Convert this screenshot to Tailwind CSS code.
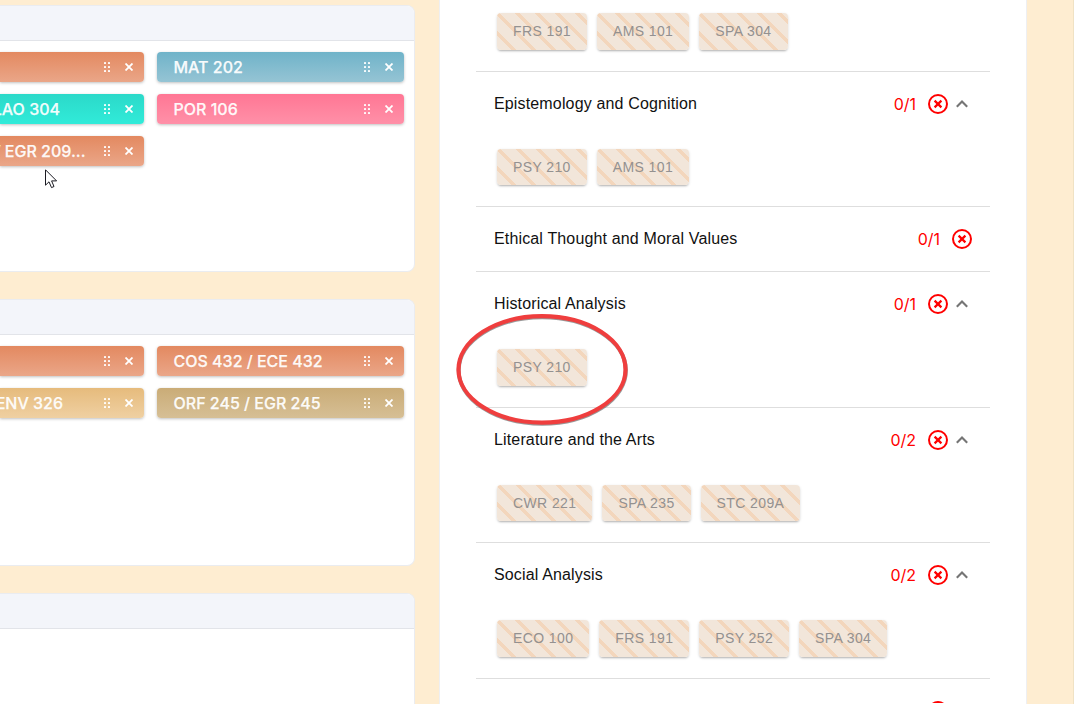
<!DOCTYPE html>
<html lang="en">
<head>
<meta charset="utf-8">
<title>Course planner</title>
<script src="https://cdn.jsdelivr.net/npm/@tailwindcss/browser@4"></script>
</head>
<body class="w-[1074px] h-[704px] overflow-hidden bg-[#feedd1] relative">
<svg class="hidden">
  <symbol id="grip" viewBox="0 0 6 10"><g fill="#fff" fill-opacity=".92"><rect x="0" y="0" width="2" height="2" rx=".5"/><rect x="4" y="0" width="2" height="2" rx=".5"/><rect x="0" y="4" width="2" height="2" rx=".5"/><rect x="4" y="4" width="2" height="2" rx=".5"/><rect x="0" y="8" width="2" height="2" rx=".5"/><rect x="4" y="8" width="2" height="2" rx=".5"/></g></symbol>
  <symbol id="close" viewBox="0 0 8 8"><path d="M0.5 0.5L7.5 7.5M7.5 0.5L0.5 7.5" stroke="#fff" stroke-width="1.8" fill="none"/></symbol>
  <symbol id="bad" viewBox="0 0 20 20"><circle cx="10" cy="10" r="9" fill="none" stroke="#f00" stroke-width="2"/><path d="M6.6 6.6L13.4 13.4M13.4 6.6L6.6 13.4" stroke="#f00" stroke-width="2.2"/></symbol>
  <symbol id="up" viewBox="0 0 12 8"><path d="M0.8 6.7L6 1.5L11.2 6.7" fill="none" stroke="#757575" stroke-width="2.1"/></symbol>
</svg>
<div class="flex h-full overflow-hidden">
  <main id="left" class="w-[415px] h-full overflow-hidden shrink-0 pt-[5px] flex flex-col gap-[27.5px]"></main>
  <aside class="ml-[24px] w-[588px] shrink-0 h-full bg-white border-x border-[#eeeff2] overflow-hidden">
    <div id="right" class="ml-[36px] w-[514px] pt-[13.4px] font-['Liberation_Sans',Arial,sans-serif]"></div>
  </aside>
  <div class="ml-auto w-px h-full bg-[#f0e2c4]"></div>
</div>
<svg class="absolute left-[450px] top-[308px]" width="184" height="124" viewBox="0 0 184 124" fill="none">
  <ellipse cx="92.3" cy="62.5" rx="83.6" ry="53.2" stroke="#555" stroke-opacity=".6" stroke-width="4"/>
  <ellipse cx="92" cy="61.4" rx="83.5" ry="53.2" stroke="#ef3e3e" stroke-width="4.2"/>
</svg>
<svg class="absolute left-[45px] top-[169px]" width="13" height="20" viewBox="0 0 13 20"><path d="M.5 .8V16.2L4 12.8L6.5 18.6L9 17.5L6.6 11.9H11.6Z" fill="#fff" stroke="#1a1a22" stroke-width="1"/></svg>
<script>
const O='from-[#e38960] to-[#eaa688]';
const sems=[
 [[O,'',60],['from-[#6fb3c9] to-[#95c4d4]','MAT 202'],['from-[#2bd9c9] to-[#31ebd9]','LAO 304',60],['from-[#ff7694] to-[#ff90a8]','POR 106'],[O,'/ EGR 209...',85.5]],
 [[O,'',60],[O,'COS 432 / ECE 432'],['from-[#e6bb7c] to-[#efd0a2]','ENV 326',63],['from-[#caac77] to-[#d6bf95]','ORF 245 / EGR 245']],
 []];
const chip=([c,t,end])=>`<div class="h-[30px] ${end?'rounded-r-[4px]':'rounded-[4px]'} bg-linear-to-b ${c} shadow-[0_1px_3px_rgba(0,0,0,0.25)] flex items-center text-white/95 text-[16px] leading-[30px] font-medium [-webkit-text-stroke:0.25px_rgba(255,255,255,0.9)] whitespace-nowrap overflow-hidden">
 ${end?`<div class="flex justify-end overflow-hidden" style="width:${end}px">${t}</div>`:`<div class="pl-[16.5px]">${t}</div>`}
 <svg class="ml-auto mr-[15px] w-[6px] h-[10px] shrink-0"><use href="#grip"/></svg><svg class="mr-[11px] w-2 h-2 shrink-0"><use href="#close"/></svg></div>`;
document.getElementById('left').innerHTML=sems.map(s=>`<section class="h-[266.5px] shrink-0 bg-white border border-l-0 border-[#eaecf0] rounded-r-[8px] overflow-hidden font-[Inter,sans-serif]">
 <div class="h-[35px] bg-[#f3f5fa] border-b border-[#e2e4e9]"></div>
 <div class="pt-[11px] grid grid-cols-[144px_247px] gap-x-[13px] gap-y-3">${s.map(chip).join('')}</div></section>`).join('');
const tag=t=>`<div class="h-[36.5px] px-4 rounded-[4px] text-[14px] leading-[36.5px] tracking-[0.39px] text-[#949190] whitespace-nowrap bg-[repeating-linear-gradient(45deg,#f2e6da_0px,#f2e6da_10.3px,#f3d6bc_10.6px,#f3d6bc_13.9px,#f2e6da_14.14px)] shadow-[0_2px_2px_-1px_rgba(0,0,0,0.2),0_1px_3px_rgba(0,0,0,0.14)]">${t}</div>`;
const tags=a=>`<div class="pl-[21px] flex gap-[10px] pb-[21px]">${a.map(tag).join('')}</div>`;
const secs=[['Epistemology and Cognition','0/1',['PSY 210','AMS 101']],['Ethical Thought and Moral Values','0/1'],['Historical Analysis','0/1',['PSY 210']],['Literature and the Arts','0/2',['CWR 221','SPA 235','STC 209A']],['Social Analysis','0/2',['ECO 100','FRS 191','PSY 252','SPA 304']],['','',[]]];
document.getElementById('right').innerHTML=tags(['FRS 191','AMS 101','SPA 304'])+secs.map(([n,c,a])=>`<section class="border-t border-[#dedede] ${!n?'h-[25px] overflow-hidden':a?'h-[135.5px]':'h-[65px]'}">
 <div class="h-16 pl-[18px] pr-[18px] flex items-center text-[16px] text-[#111]"><span class="whitespace-nowrap tracking-[0.15px]">${n}</span>
 <span class="ml-auto mr-3 text-[#f00] font-[Inter,sans-serif]">${c}</span><svg class="w-5 h-5 shrink-0"><use href="#bad"/></svg>${a?`<svg class="ml-2 mr-1 w-3 h-2 shrink-0"><use href="#up"/></svg>`:''}</div>
 ${a&&a.length?`<div class="pt-[13px]">${tags(a)}</div>`:''}</section>`).join('');
</script>
</body>
</html>
